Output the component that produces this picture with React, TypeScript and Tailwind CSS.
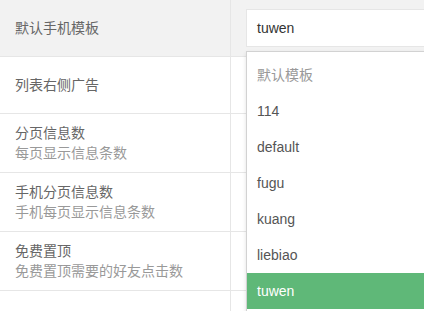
import React from "react";

const font = {
  fontFamily:
    '"Liberation Sans", Arial, "Noto Sans CJK SC", sans-serif',
};

type Row = {
  title: string;
  desc?: string;
};

const rows: Row[] = [
  { title: "列表右侧广告" },
  { title: "分页信息数", desc: "每页显示信息条数" },
  { title: "手机分页信息数", desc: "手机每页显示信息条数" },
  { title: "免费置顶", desc: "免费置顶需要的好友点击数" },
  { title: "" },
];

const options = ["114", "default", "fugu", "kuang", "liebiao", "tuwen"];

function TemplateSelect() {
  const selected = "tuwen";
  return (
    <div className="relative">
      <div className="h-[38px] w-[400px] border border-[#e6e6e6] bg-white pl-[10px] flex items-center text-[14px] text-[#333]">
        {selected}
      </div>
      <div className="absolute left-0 top-[42px] z-10 w-[400px] border border-[#d2d2d2] bg-white py-[5px] shadow-[0_2px_4px_rgba(0,0,0,0.12)]">
        <div className="h-[36px] leading-[36px] px-[10px] text-[14px] text-[#999]">
          默认模板
        </div>
        {options.map((o) => (
          <div
            key={o}
            className={`h-[36px] leading-[36px] px-[10px] text-[14px] ${
              o == selected ? "bg-[#5fb878] text-white" : "text-[#555]"
            }`}
          >
            {o}
          </div>
        ))}
      </div>
    </div>
  );
}

export default function App() {
  return (
    <div className="w-full h-[311px] overflow-hidden bg-white" style={font}>
      <div className="flex bg-[#f2f2f2] border-b border-[#e6e6e6]">
        <div className="w-[231px] shrink-0 border-r border-[#e6e6e6] px-[15px] flex items-center text-[14px] text-[#666]">
          默认手机模板
        </div>
        <div className="flex-1 px-[15px] py-[9px] min-w-0">
          <TemplateSelect />
        </div>
      </div>
      {rows.map((r, i) => (
        <div key={i} className="flex border-b border-[#e6e6e6]">
          <div className="w-[231px] shrink-0 border-r border-[#e6e6e6] px-[15px] py-[9px] flex flex-col justify-center text-[14px] leading-[20px]">
            <div className="text-[#666]">{r.title}</div>
            {r.desc && <div className="text-[#999]">{r.desc}</div>}
          </div>
          <div className="flex-1 py-[9px]">
            <div className="h-[38px]"></div>
          </div>
        </div>
      ))}
    </div>
  );
}
